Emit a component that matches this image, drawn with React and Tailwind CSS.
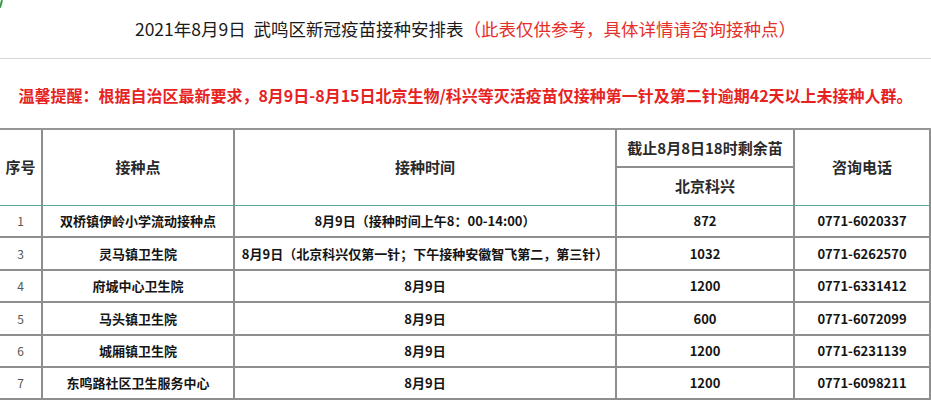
import React from "react";

const font = { fontFamily: '"Noto Sans CJK SC", "Noto Sans", sans-serif' };

const rows = [
  ["1", "双桥镇伊岭小学流动接种点", "8月9日（接种时间上午8：00-14:00）", "872", "0771-6020337"],
  ["3", "灵马镇卫生院", "8月9日（北京科兴仅第一针；下午接种安徽智飞第二，第三针）", "1032", "0771-6262570"],
  ["4", "府城中心卫生院", "8月9日", "1200", "0771-6331412"],
  ["5", "马头镇卫生院", "8月9日", "600", "0771-6072099"],
  ["6", "城厢镇卫生院", "8月9日", "1200", "0771-6231139"],
  ["7", "东鸣路社区卫生服务中心", "8月9日", "1200", "0771-6098211"],
];

export default function App() {
  const cell = "flex items-center justify-center border-r-2 border-b-2 border-[#8e8e8e] overflow-hidden whitespace-nowrap";
  const head = "flex items-center justify-center border-r-2 border-[#8e8e8e] border-b border-b-[#5aa89e] text-[15px] font-bold text-[#2a2a2a]";
  return (
    <div className="relative w-[931px] h-[400px] overflow-hidden bg-white" style={font}>
      <div className="absolute left-0 top-0 h-[8px] w-[2px] bg-[#3a9a4a] rotate-[15deg]" />
      <div className="flex h-[59px] items-center justify-center border-b border-[#d6d6d6] text-[17.5px] leading-none">
        <span className="text-[#1a1a1a]">2021年8月9日&nbsp;&nbsp;武鸣区新冠疫苗接种安排表</span>
        <span className="text-[#e3302b]">（此表仅供参考，具体详情请咨询接种点）</span>
      </div>
      <div className="flex h-[69px] items-center justify-center pt-[3px] text-[16px] font-bold leading-none text-[#e6231f]">
        温馨提醒：根据自治区最新要求，8月9日-8月15日北京生物/科兴等灭活疫苗仅接种第一针及第二针逾期42天以上未接种人群。
      </div>
      <div className="grid grid-cols-[43px_192px_382px_178px_136px] grid-rows-[38px_38px_32px_33px_32px_33px_32px_32px] border-t-2 border-[#969696]">
        <div className={`${head} row-span-2`}>序号</div>
        <div className={`${head} row-span-2`}>接种点</div>
        <div className={`${head} row-span-2`}>接种时间</div>
        <div className="flex items-center justify-center border-r-2 border-b-2 border-[#8e8e8e] text-[15px] font-bold text-[#2a2a2a]">截止8月8日18时剩余苗</div>
        <div className={`${head} row-span-2`}>咨询电话</div>
        <div className={head}>北京科兴</div>
        {rows.map((r, i) => (
          <React.Fragment key={i}>
            <div className={`${cell} text-[12px] text-[#555]`}>{r[0]}</div>
            <div className={`${cell} text-[13px] font-bold text-[#151515]`}>{r[1]}</div>
            <div className={`${cell} text-[13px] font-bold text-[#151515]`}>{r[2]}</div>
            <div className={`${cell} text-[13px] font-bold text-[#151515]`}>{r[3]}</div>
            <div className={`${cell} text-[13px] font-bold text-[#151515]`}>{r[4]}</div>
          </React.Fragment>
        ))}
      </div>
    </div>
  );
}
